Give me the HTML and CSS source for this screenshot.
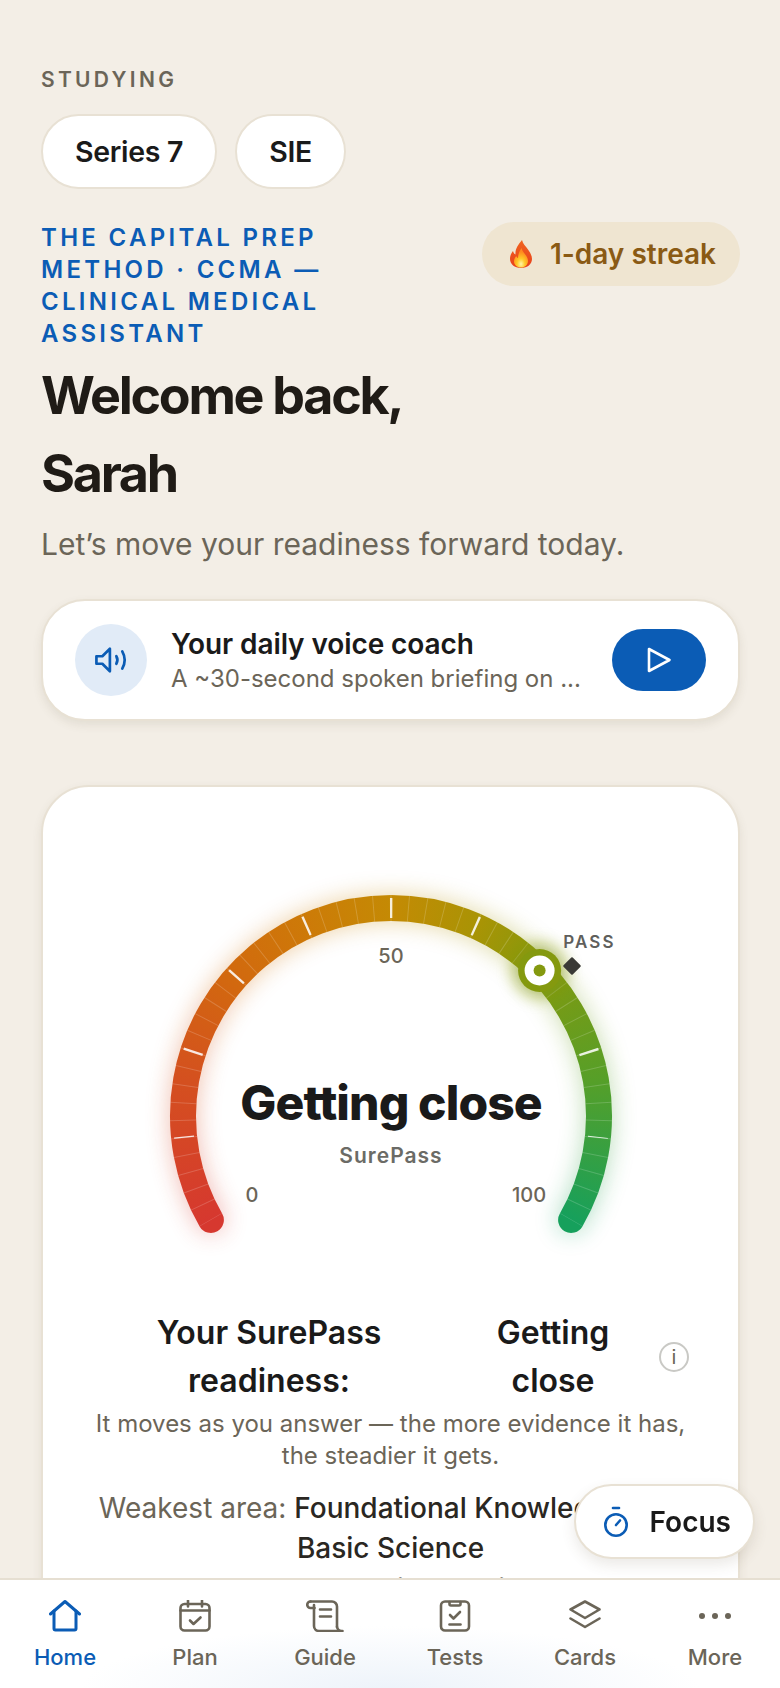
FILE: index.html
```html
<!doctype html>
<html>
<head>
	<meta charset="utf-8">
	<title>Home - SurePass</title>
	<link rel="stylesheet" href="styles.css">
</head>
<body>

	<main class="page">
		<div class="studying">STUDYING</div>
		<div class="chips">
			<button class="chip">Series 7</button>
			<button class="chip">SIE</button>
		</div>

		<div class="headrow">
			<div class="eyebrow">THE CAPITAL PREP METHOD · CCMA — CLINICAL MEDICAL ASSISTANT</div>
			<div class="streak">
				<svg class="flame" viewBox="0 0 22 28" width="22" height="28">
					<defs>
						<linearGradient id="flameout" x1="0" y1="0" x2="0" y2="1">
							<stop offset="0" stop-color="#f0641e"/>
							<stop offset="1" stop-color="#e8401c"/>
						</linearGradient>
						<radialGradient id="flamein" cx="0.5" cy="0.82" r="0.62">
							<stop offset="0" stop-color="#fff6a8"/>
							<stop offset="0.45" stop-color="#ffc928"/>
							<stop offset="1" stop-color="#ff8a1e"/>
						</radialGradient>
					</defs>
					<path fill="url(#flameout)" d="M12 0c1 4 3.500 6 6 9.500 2.500 3.500 4 6.500 4 9.500 0 5-4.500 9-11 9S0 24 0 19c0-3.500 1.500-6 3-8 .5 2 1.300 3 2.500 3.500C5 9 8 5 12 0z"/>
					<path fill="url(#flamein)" d="M11.500 8c.5 3 2.500 4.500 4.500 7.500 1.500 2.300 2 4 2 5.500 0 3.800-3 6.500-7 6.500s-7-2.700-7-6c0-2.500 1-4 2.200-5.500.4 1.200 1 1.800 1.800 2C8 14.500 9.500 11 11.500 8z"/>
				</svg>
				<span>1-day streak</span>
			</div>
		</div>

		<h1>Welcome back,<br>Sarah</h1>
		<p class="lead">Let’s move your readiness forward today.</p>

		<section class="voice">
			<div class="voice-icon">
				<svg viewBox="0 0 32 26" width="35" height="28" fill="none" stroke="#0b5cb5" stroke-width="2.500" stroke-linecap="round" stroke-linejoin="round">
					<path d="M2 9.500H7.500L14.500 2.500V23.500L7.500 16.500H2Z"/>
					<path d="M20.500 9.500Q22.500 13 20.500 16.500"/>
					<path d="M26 5Q30.500 13 26 21"/>
				</svg>
			</div>
			<div class="voice-text">
				<div class="voice-title">Your daily voice coach</div>
				<div class="voice-sub">A ~30-second spoken briefing on ...</div>
			</div>
			<button class="voice-play">
				<svg viewBox="0 0 26 28" width="26" height="28" fill="none" stroke="#fff" stroke-width="2.600" stroke-linejoin="round"><path d="M3 3L23.500 14L3 25Z"/></svg>
			</button>
		</section>

		<section class="ready">
			<svg class="gauge" viewBox="0 0 500 400" width="500" height="400">
				<defs>
					<mask id="arcmask" maskUnits="userSpaceOnUse" x="0" y="0" width="500" height="400">
						<path d="M69.870 370A208 208 0 1 1 430.130 370" fill="none" stroke="#fff" stroke-width="26" stroke-linecap="round"/>
					</mask>
					<filter id="soft" x="-30%" y="-30%" width="160%" height="160%"><feGaussianBlur stdDeviation="12"/></filter>
					<filter id="softknob" x="-80%" y="-80%" width="260%" height="260%"><feGaussianBlur stdDeviation="8"/></filter>
				</defs>

				<g class="gauge-glow" filter="url(#soft)">
					<foreignObject x="0" y="0" width="500" height="400" mask="url(#arcmask)"><div class="sweep"></div></foreignObject>
				</g>
				<foreignObject x="0" y="0" width="500" height="400" mask="url(#arcmask)"><div class="sweep"></div></foreignObject>

				<!-- every 2 points, then every 10 -->
				<path class="tick-minor" d="M69.870 370A208 208 0 1 1 430.130 370"/>
				<path class="tick-major" d="M43.140 287.740A208 208 0 1 1 456.860 287.740"/>

				<circle cx="398.600" cy="120.500" r="27" fill="#84990f" opacity="0.55" filter="url(#softknob)"/>
				<circle cx="398.600" cy="120.500" r="21.500" fill="#84990f"/>
				<circle cx="398.600" cy="120.500" r="15" fill="#fff"/>
				<circle cx="398.600" cy="120.500" r="6" fill="#84990f"/>

				<rect x="424.500" y="109.500" width="13" height="13" rx="1" fill="#3a3a36" transform="rotate(45 431 116)"/>
				<text class="g-pass" x="448.500" y="98">PASS</text>
				<text class="g-num" x="250" y="113">50</text>
				<text class="g-num" x="111" y="352">0</text>
				<text class="g-num" x="388" y="352">100</text>
				<text class="g-word" x="250" y="270">Getting close</text>
				<text class="g-brand" x="250" y="313">SurePass</text>
			</svg>

			<div class="ready-row">
				<span class="ready-a">Your SurePass readiness:</span>
				<span class="ready-b">Getting close</span>
				<span class="info">i</span>
			</div>
			<p class="ready-note">It moves as you answer — the more evidence it has, the steadier it gets.</p>
			<p class="weak">Weakest area: <b>Foundational Knowledge and Basic Science</b></p>
			<p class="weak weak-next">Next up: your daily plan is ready</p>
		</section>
	</main>

	<button class="focus">
		<svg viewBox="0 0 26 32" width="26" height="32" fill="none" stroke="#0b5cb5" stroke-width="2.600" stroke-linecap="round">
			<path d="M10 2H16"/>
			<circle cx="13" cy="19" r="10.700"/>
			<path d="M13 19L17 14.500"/>
		</svg>
		<span>Focus</span>
	</button>

	<nav class="tabs">
		<a class="tab active">
			<svg viewBox="0 0 32 32" width="32" height="32"><path d="M1.500 14L16 1.500L30.500 14"/><path d="M5 11V28.500A1.500 1.500 0 0 0 6.500 30H25.500A1.500 1.500 0 0 0 27 28.500V11"/></svg>
			<span>Home</span>
		</a>
		<a class="tab">
			<svg viewBox="0 0 32 32" width="32" height="32"><rect x="1.500" y="4" width="29" height="26.500" rx="4"/><path d="M1.500 10.500H30.500"/><path d="M9 0.500V6.500M23 0.500V6.500"/><path d="M11 20.500L14.500 24L21.500 17.500"/></svg>
			<span>Plan</span>
		</a>
		<a class="tab">
			<svg viewBox="0 0 38 32" width="38" height="32"><path d="M4.500 1.500H26A5 5 0 0 1 31 6.500V27"/><path d="M4.500 1.500A3.200 3.200 0 0 0 4.500 8H8.500"/><path d="M8 5V26A5 5 0 0 0 13 31H36.500A5 5 0 0 1 31 27"/><path d="M14 9.500H25M14 16.500H25"/></svg>
			<span>Guide</span>
		</a>
		<a class="tab">
			<svg viewBox="0 0 32 32" width="32" height="32"><rect x="2" y="1.500" width="28" height="29" rx="4"/><path d="M10.500 2V4A1.500 1.500 0 0 0 12 5.500H20A1.500 1.500 0 0 0 21.500 4V2"/><path d="M11 15L14.500 18.500L21 12"/><path d="M10.500 24.500H21.500"/></svg>
			<span>Tests</span>
		</a>
		<a class="tab">
			<svg viewBox="0 0 32 32" width="32" height="32"><path d="M16 1.500L30.500 9.500L16 18L1.500 9.500Z"/><path d="M1.500 18.500L16 27L30.500 18.500"/></svg>
			<span>Cards</span>
		</a>
		<a class="tab">
			<svg viewBox="0 0 32 32" width="32" height="32" class="dots"><circle cx="3" cy="16" r="3"/><circle cx="16" cy="16" r="3"/><circle cx="29" cy="16" r="3"/></svg>
			<span>More</span>
		</a>
	</nav>

</body>
</html>
```

FILE: styles.css
```css
* {margin:0; padding:0; box-sizing:border-box;}
html, body {height:1688px; overflow:hidden;}
body {background:#f3eee6; font-family:"Inter","Liberation Sans",sans-serif; color:#1a1a1a;}
button {font-family:inherit; border:none; background:none; color:inherit;}

.page {padding:66px 40px 0 41px;}

.studying {font-size:21px; line-height:28px; font-weight:600; letter-spacing:3.3px; color:#6b6558;}
.chips {display:flex; gap:18px; margin-top:20px;}
.chip {height:75px; padding:0 32px; border-radius:38px; background:#fff; border:2px solid #e8e1d4; font-size:28.5px; font-weight:600; letter-spacing:-0.3px;}

.headrow {display:flex; justify-content:space-between; align-items:flex-start; margin-top:33px;}
.eyebrow {width:300px; font-size:24px; line-height:32px; font-weight:600; letter-spacing:3.3px; color:#0b5cb5;}
.streak {display:flex; align-items:center; gap:18px; height:64px; padding:0 24px 0 28px; border-radius:32px; background:#efe5d1; color:#8a5a14; font-size:28px; font-weight:600;}

h1 {margin-top:7px; font-size:52px; line-height:78px; font-weight:700; letter-spacing:-2.3px; color:#1f1b16;}
.lead {margin-top:9px; font-size:30px; line-height:44px; color:#6b6558;}

.voice {display:flex; align-items:center; height:122px; margin-top:33px; padding:0 32px; border:2px solid #e8e1d4; border-radius:44px; background:#fff; box-shadow:0 4px 10px rgba(90,75,50,0.1);}
.voice-icon {display:flex; align-items:center; justify-content:center; flex:none; width:72px; height:72px; border-radius:50%; background:#e1ebf7;}
.voice-text {flex:1; min-width:0; margin:1px 0 0 24px;}
.voice-title {font-size:28px; line-height:36px; font-weight:600; letter-spacing:-0.1px;}
.voice-sub {font-size:24px; line-height:34px; color:#6b6558; white-space:nowrap;}
.voice-play {display:flex; align-items:center; justify-content:center; flex:none; width:94px; height:62px; border-radius:31px; background:#0b5cb5;}

.ready {height:880px; margin-top:64px; padding:0 38px; border:2px solid #e8e1d4; border-radius:48px; background:#fff; box-shadow:0 4px 10px rgba(90,75,50,0.1);}
.gauge {display:block; margin:63px auto 0; overflow:visible;}
.sweep {width:500px; height:400px; background:conic-gradient(from 240deg at 250px 266px, #d6382f 0deg, #d4501f 40deg, #d2680f 70deg, #cd7a08 96deg, #c48a04 120deg, #a89405 145deg, #84990f 165deg, #569f28 200deg, #16a05c 240deg, #16a05c 300deg, #d6382f 300deg);}
.gauge-glow {opacity:0.36;}
.tick-minor {fill:none; stroke:rgba(255,255,255,0.18); stroke-width:26; stroke-dasharray:1 16.42; stroke-dashoffset:0.5;}
.tick-major {fill:none; stroke:rgba(255,255,255,0.85); stroke-width:20; stroke-dasharray:2.4 84.73; stroke-dashoffset:1.2;}
.gauge text {text-anchor:middle; fill:#6b6558;}
.g-num {font-size:20px; font-weight:500;}
.gauge .g-pass {font-size:17px; font-weight:600; letter-spacing:2.2px; fill:#5f5f5c;}
.gauge .g-word {font-size:48px; font-weight:800; letter-spacing:-0.9px; fill:#1a1a1a;}
.gauge .g-brand {font-size:21px; font-weight:600; letter-spacing:1px; fill:#6b6b66;}

.ready-row {display:grid; grid-template-columns:376px 192px 1fr; align-items:center; margin-top:59px; text-align:center; font-size:32px; line-height:48px; font-weight:600;}
.ready-a {padding:0 60px;}
.ready-b {padding:0 30px;}
.info {width:30px; height:30px; margin-left:10px; border:2px solid #c9c9c5; border-radius:50%; font-size:20px; line-height:26px; font-weight:400; color:#6b6558;}
.ready-note {margin-top:3px; text-align:center; font-size:24px; line-height:32px; color:#6b6558;}
.weak {text-align:center; font-size:28px; line-height:40px; color:#6b6558;}
.ready-note + .weak {margin-top:16px;}
.weak b {font-weight:500; color:#2a2722;}
.weak-next {margin-top:1px;}

.focus {position:fixed; right:25px; bottom:129px; display:flex; align-items:center; gap:21px; height:75px; padding:0 22px 0 27px; border:2px solid #e8e1d4; border-radius:38px; background:#fff; font-size:28px; font-weight:600; box-shadow:0 6px 14px rgba(90,75,50,0.12);}

.tabs {position:fixed; left:0; right:0; bottom:0; display:flex; height:110px; padding-top:20px; border-top:2px solid #e6dfd2; background:radial-gradient(ellipse 310px 64px at 390px 110px, #edf3fa, rgba(237,243,250,0)), #fff;}
.tab {display:flex; flex-direction:column; align-items:center; gap:11px; width:130px; font-size:22px; line-height:28px; font-weight:450; color:#6b6558;}
.tab svg {fill:none; stroke:#6b6558; stroke-width:2.6; stroke-linecap:round; stroke-linejoin:round;}
.tab .dots {fill:#6b6558; stroke:none;}
.tab.active {color:#0b5cb5;}
.tab.active svg {stroke:#0b5cb5; stroke-width:3;}
```
